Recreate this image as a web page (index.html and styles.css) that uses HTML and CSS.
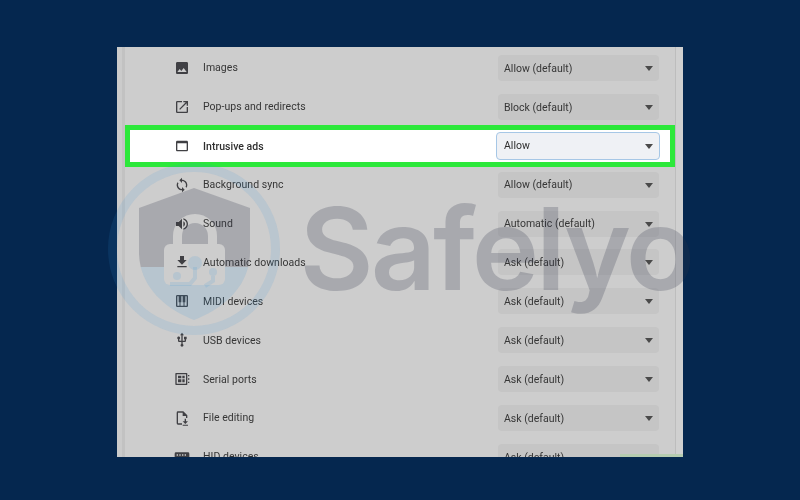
FILE: index.html
```html
<!DOCTYPE html>
<html lang="en">
<head>
<meta charset="utf-8">
<title>Site settings</title>
<link rel="stylesheet" href="styles.css">
</head>
<body>
<div class="frame">
  <div class="strip-left"></div>
  <main class="list">
    <div class="row"><svg class="icon" viewBox="0 0 24 24"><path d="M21 19V5c0-1.1-.9-2-2-2H5c-1.1 0-2 .9-2 2v14c0 1.1.9 2 2 2h14c1.1 0 2-.9 2-2zM8.5 13.5l2.5 3.01L14.5 12l4.5 6H5l3.5-4.5z"/></svg><span class="label">Images</span><div class="select">Allow (default)</div></div>
    <div class="row"><svg class="icon" viewBox="0 0 24 24"><path d="M19 19H5V5h7V3H5a2 2 0 0 0-2 2v14a2 2 0 0 0 2 2h14c1.1 0 2-.9 2-2v-7h-2v7zM14 3v2h3.59l-9.83 9.83 1.41 1.41L19 6.41V10h2V3h-7z"/></svg><span class="label">Pop-ups and redirects</span><div class="select">Block (default)</div></div>
    <div class="row row-hl"><svg class="icon" viewBox="0 0 24 24"><path d="M19 4H5c-1.11 0-2 .9-2 2v12c0 1.1.89 2 2 2h14c1.1 0 2-.9 2-2V6c0-1.1-.89-2-2-2zm0 14H5V8h14v10z"/></svg><span class="label">Intrusive ads</span><div class="select select-open">Allow</div></div>
    <div class="row"><svg class="icon" viewBox="0 0 24 24"><path d="M12 4V1L8 5l4 4V6c3.31 0 6 2.69 6 6 0 1.01-.25 1.97-.7 2.8l1.46 1.46C19.54 15.03 20 13.57 20 12c0-4.42-3.58-8-8-8zm0 14c-3.31 0-6-2.69-6-6 0-1.01.25-1.97.7-2.8L5.24 7.74C4.46 8.97 4 10.43 4 12c0 4.42 3.58 8 8 8v3l4-4-4-4v3z"/></svg><span class="label">Background sync</span><div class="select">Allow (default)</div></div>
    <div class="row"><svg class="icon" viewBox="0 0 24 24"><path d="M3 9v6h4l5 5V4L7 9H3zm13.5 3c0-1.77-1.02-3.29-2.5-4.03v8.05c1.48-.73 2.5-2.25 2.5-4.02zM14 3.23v2.06c2.89.86 5 3.54 5 6.71s-2.11 5.85-5 6.71v2.06c4.01-.91 7-4.49 7-8.77s-2.99-7.86-7-8.77z"/></svg><span class="label">Sound</span><div class="select">Automatic (default)</div></div>
    <div class="row"><svg class="icon" viewBox="0 0 24 24"><path d="M19 9h-4V3H9v6H5l7 7 7-7zM5 18v2h14v-2H5z"/></svg><span class="label">Automatic downloads</span><div class="select">Ask (default)</div></div>
    <div class="row"><svg class="icon" viewBox="0 0 24 24"><path fill-rule="evenodd" d="M5 3H19a2 2 0 0 1 2 2V19a2 2 0 0 1-2 2H5a2 2 0 0 1-2-2V5a2 2 0 0 1 2-2zM5 5V19H8.25V14H7V5zM9.75 19H14.25V14H13V5H11V14H9.75zM15.75 19H19V5H17V14H15.75z"/></svg><span class="label">MIDI devices</span><div class="select">Ask (default)</div></div>
    <div class="row"><svg class="icon" viewBox="0 0 24 24"><path d="M15 7v4h1v2h-3V5h2l-3-4-3 4h2v8H8v-2.07c.7-.37 1.2-1.08 1.2-1.93 0-1.21-.99-2.2-2.2-2.2-1.21 0-2.2.99-2.2 2.2 0 .85.5 1.56 1.2 1.93V13c0 1.11.89 2 2 2h3v3.05c-.71.37-1.2 1.1-1.2 1.95 0 1.22.99 2.2 2.2 2.2 1.21 0 2.2-.98 2.2-2.2 0-.85-.49-1.58-1.2-1.95V15h3c1.11 0 2-.89 2-2v-2h1V7h-4z"/></svg><span class="label">USB devices</span><div class="select">Ask (default)</div></div>
    <div class="row"><svg class="icon" viewBox="0 0 24 24"><path fill-rule="evenodd" d="M3 3H19a1 1 0 0 1 1 1V20a1 1 0 0 1-1 1H3a1 1 0 0 1-1-1V4a1 1 0 0 1 1-1zM4 5V19H18V5zM6 7H11V11H6zM12.500 7H16V11H12.500zM6 12.500H11V17H6zM12.500 12.500H16V17H12.500zM21 6H23V8H21zM21 11H23V13H21zM21 16H23V18H21z"/></svg><span class="label">Serial ports</span><div class="select">Ask (default)</div></div>
    <div class="row"><svg class="icon" viewBox="0 0 24 24"><path d="M14 2H6a2 2 0 0 0-2 2v16a2 2 0 0 0 2 2h6v-2H6V4h7v5h5v3h2V8zM16 13h2v4h3l-4 4-4-4h3zM13 22h8v1.500h-8z"/></svg><span class="label">File editing</span><div class="select">Ask (default)</div></div>
    <div class="row"><svg class="icon" viewBox="0 0 24 24"><path fill-rule="evenodd" d="M3 5H21a2 2 0 0 1 2 2V17a2 2 0 0 1-2 2H3a2 2 0 0 1-2-2V7a2 2 0 0 1 2-2zM4 8V10H6V8zM8 8V10H10V8zM12 8V10H14V8zM16 8V10H18V8z"/></svg><span class="label">HID devices</span><div class="select">Ask (default)</div></div>
  </main>
  <div class="strip-right"></div>
  <div class="next-hl"></div>
</div>
<div class="watermark">
  <svg class="wm-logo" viewBox="0 0 800 500">
    <defs>
      <mask id="lock-cut" maskUnits="userSpaceOnUse" x="0" y="0" width="800" height="500">
        <rect width="800" height="500" fill="#fff"/>
        <path d="M177.500 246V236A17.500 17.500 0 0 1 212.500 236V246" fill="none" stroke="#000" stroke-width="9"/>
        <rect x="164" y="244" width="61" height="41" rx="6" fill="#000"/>
      </mask>
      <clipPath id="shield-top"><rect x="130" y="180" width="130" height="87"/></clipPath>
      <clipPath id="shield-bottom"><rect x="130" y="267" width="130" height="60"/></clipPath>
    </defs>
    <circle class="wm-ring" cx="194" cy="249" r="81.500"/>
    <g mask="url(#lock-cut)">
      <path class="wm-grey" clip-path="url(#shield-top)" d="M194 188L250 208V252C250 285 225 308 194 320C163 308 139 285 139 252V208Z"/>
      <path class="wm-blue" clip-path="url(#shield-bottom)" d="M194 188L250 208V252C250 285 225 308 194 320C163 308 139 285 139 252V208Z"/>
    </g>
    <g class="wm-circuit">
      <circle cx="195" cy="263" r="7"/>
      <circle cx="177" cy="276" r="4"/>
      <circle cx="213" cy="272" r="4"/>
      <path class="wm-trace" d="M195 267V278L190 284H170M213 276V281L205 286"/>
    </g>
  </svg>
  <span class="wm-text">Safelyo</span>
</div>
</body>
</html>
```
FILE: styles.css
```css
html, body {
  margin: 0;
  height: 100%;
}
body {
  background: #05274f;
  display: flex;
  justify-content: center;
  align-items: flex-start;
  padding-top: 47px;
  box-sizing: border-box;
  height: 500px;
  overflow: hidden;
  position: relative;
  font-family: Roboto, "Liberation Sans", sans-serif;
}
.frame {
  width: 566px;
  height: 410px;
  background: #cdcdcd;
  display: flex;
  overflow: hidden;
  position: relative;
  filter: blur(0.4px);
}
.strip-left {
  width: 8px;
  flex: none;
  box-sizing: border-box;
  background: #cbcbcb;
  border-right: 3px solid #c2c2c2;
}
.strip-right {
  width: 8px;
  flex: none;
  box-sizing: border-box;
  background: #d0d0d0;
  border-left: 1px solid #bdbdbd;
}
.list {
  flex: 1;
  min-width: 0;
  padding-top: 1.500px;
  display: grid;
  grid-auto-rows: 38.900px;
  align-content: start;
}
.row {
  display: flex;
  align-items: center;
  padding: 0 16px 0 50px;
  color: #363636;
  font-size: 10.500px;
  letter-spacing: 0.03px;
}
.row-hl {
  margin: -1.300px 0 -2.300px;
  padding: 0 10px 0 45px;
  background: #fff;
  border: 5px solid #2ce83a;
  border-top-width: 5.500px;
  box-sizing: border-box;
  color: #2e2e2e;
  font-weight: 500;
}
.icon {
  width: 16px;
  height: 16px;
  flex: none;
  margin: 0 12px 0 -1.500px;
  fill: #404044;
}
.label {
  flex: 1;
  padding-left: 1.500px;
}
.select {
  width: 161px;
  height: 26px;
  flex: none;
  box-sizing: border-box;
  padding: 0.500px 0 0 6px;
  display: flex;
  align-items: center;
  position: relative;
  background: #c5c5c5;
  border-radius: 4px;
  font-size: 10.500px;
  font-weight: 400;
  letter-spacing: 0;
  color: #363636;
}
.select::after {
  content: "";
  position: absolute;
  right: 6.500px;
  top: 11px;
  border-style: solid;
  border-width: 5px 4px 0;
  border-color: #4a4a4a transparent transparent;
}
.select-open {
  width: 164px;
  height: 28px;
  padding: 0 0 1px 7px;
  background: #eff1f5;
  border: 1px solid #a6c7e6;
  color: #2e2e2e;
}
.next-hl {
  position: absolute;
  right: 0;
  bottom: 0;
  width: 63px;
  height: 3px;
  background: #b6ccb0;
}
.watermark {
  position: absolute;
  inset: 0;
  pointer-events: none;
}
.wm-logo {
  position: absolute;
  left: 0;
  top: 0;
  width: 800px;
  height: 500px;
}
.wm-ring {
  fill: none;
  stroke: rgba(50, 150, 220, 0.12);
  stroke-width: 9;
}
.wm-grey {
  fill: rgba(48, 52, 75, 0.23);
}
.wm-blue,
.wm-circuit {
  fill: rgba(50, 150, 220, 0.14);
}
.wm-trace {
  fill: none;
  stroke: rgba(50, 150, 220, 0.14);
  stroke-width: 4;
}
.wm-text {
  position: absolute;
  left: 299.500px;
  top: 180.500px;
  font-family: Inter, "Liberation Sans", sans-serif;
  font-size: 114px;
  line-height: 136px;
  font-weight: 600;
  letter-spacing: -3px;
  color: rgba(48, 52, 75, 0.23);
  white-space: nowrap;
}
```
